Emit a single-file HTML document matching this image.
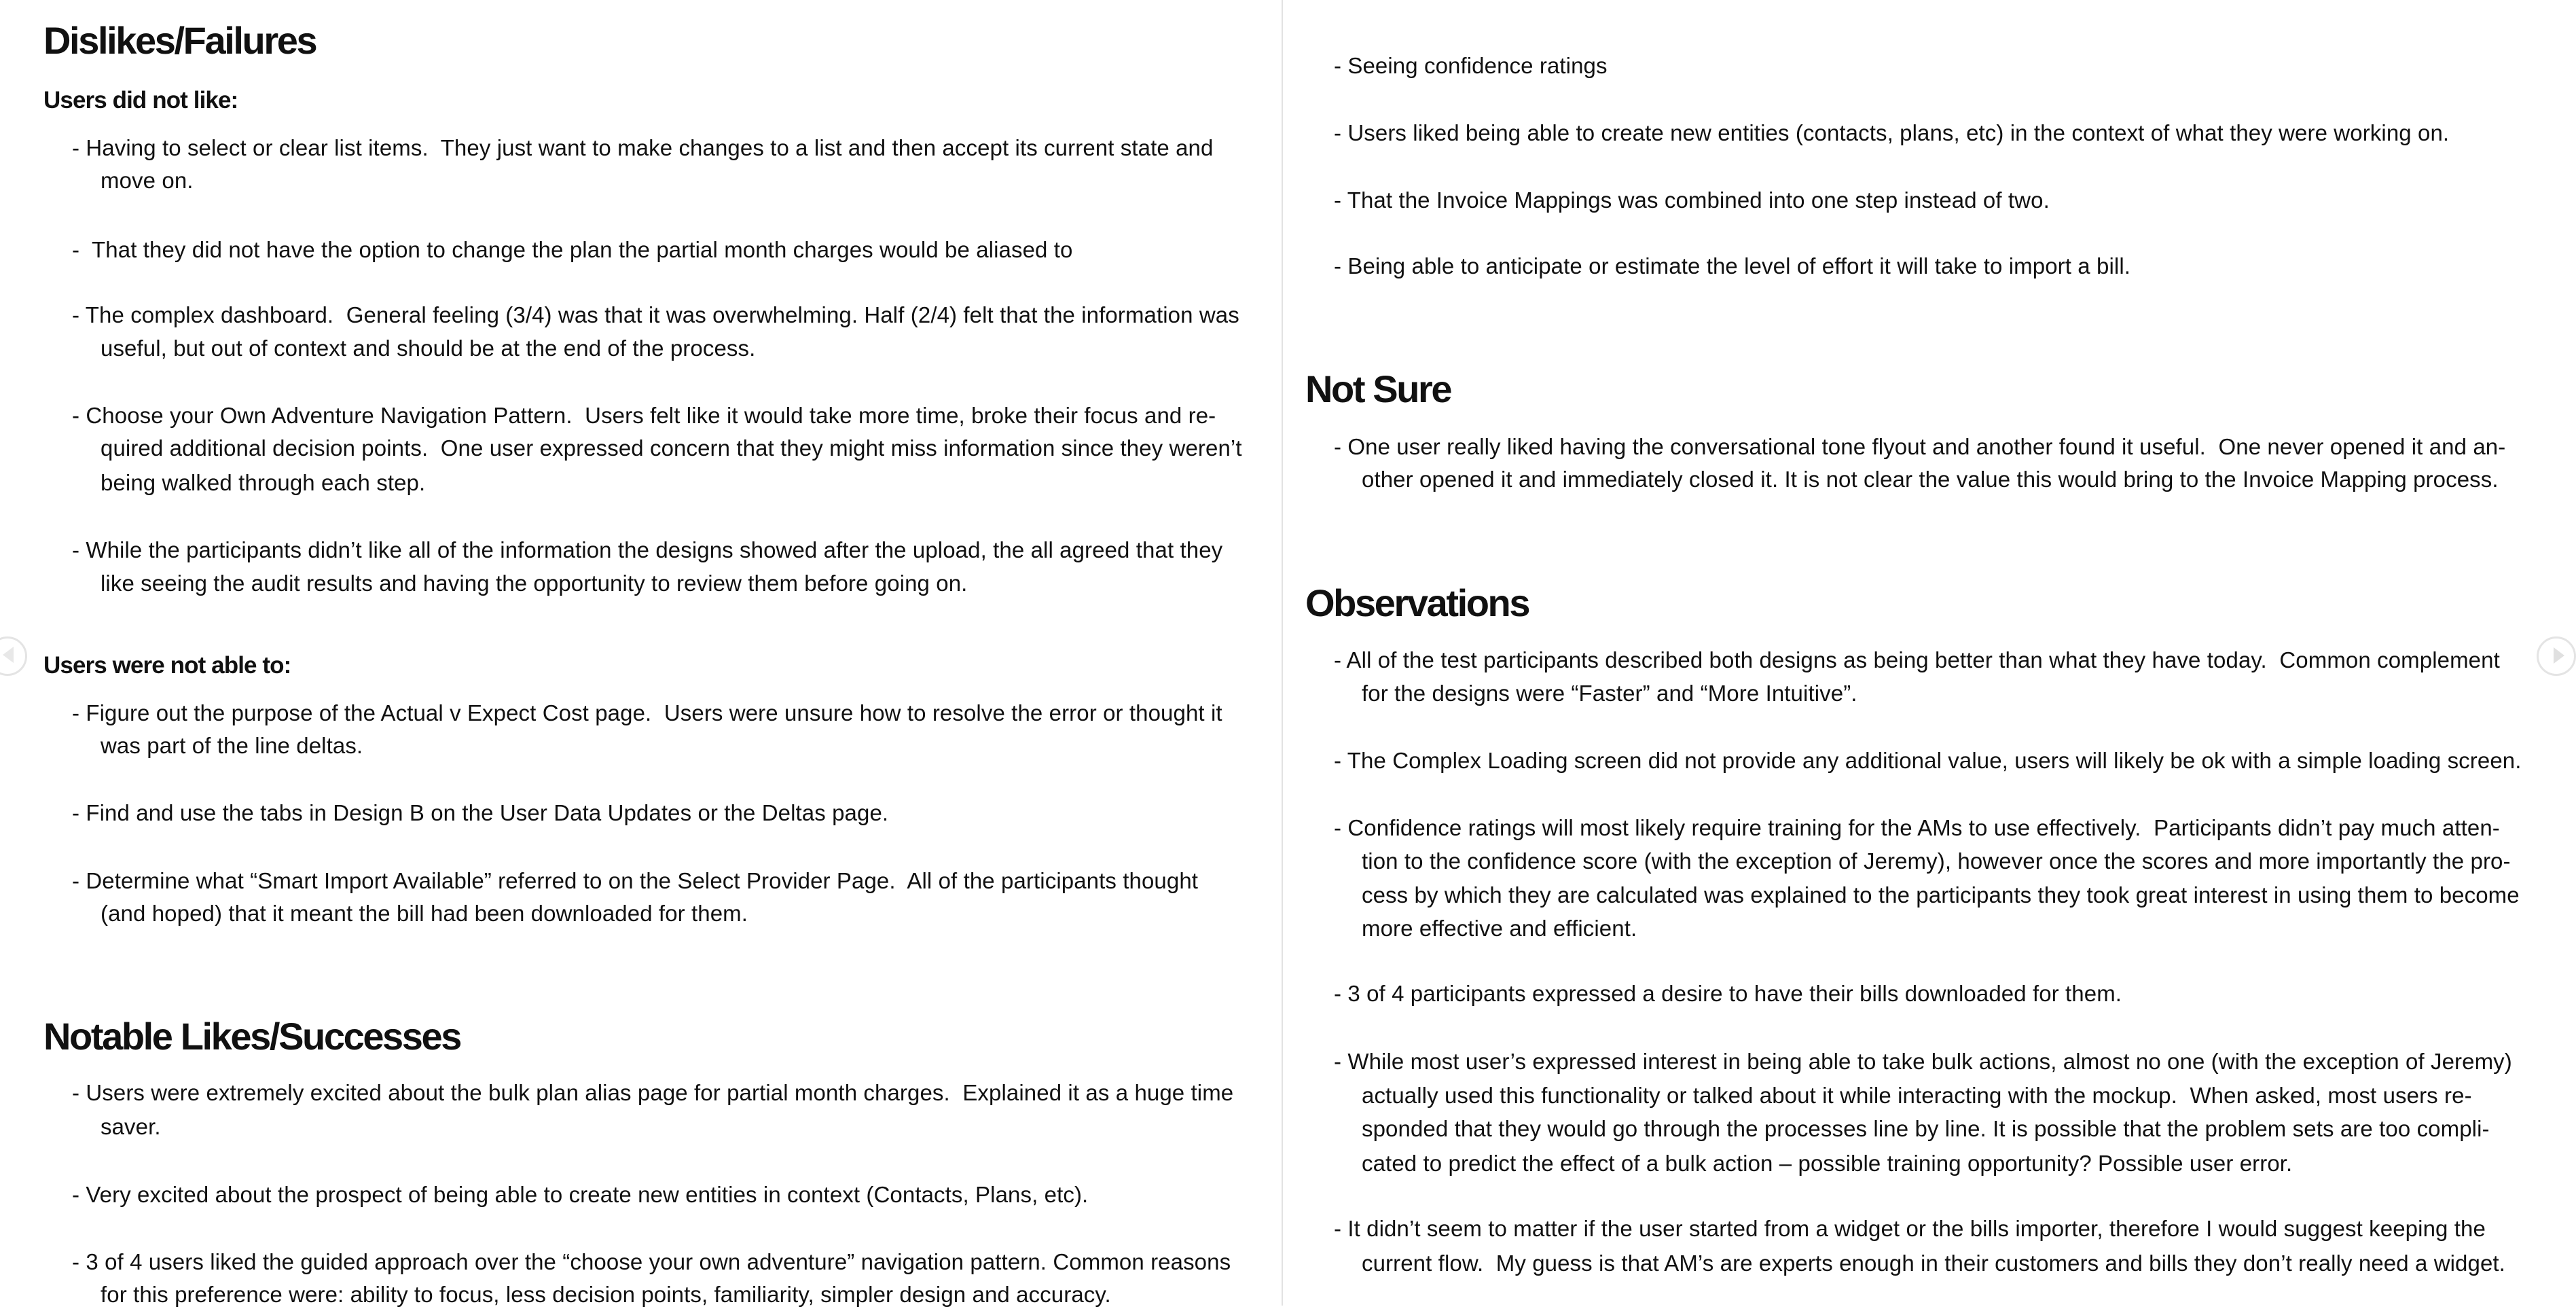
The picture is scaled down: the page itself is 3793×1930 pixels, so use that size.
<!DOCTYPE html>
<html><head><meta charset="utf-8"><style>
html,body{margin:0;padding:0;background:#fff;}
body{width:3793px;height:1922px;position:relative;overflow:hidden;font-family:"Liberation Sans",sans-serif;color:#111;}
.l{position:absolute;white-space:nowrap;font-size:33px;line-height:48px;letter-spacing:0.1px;}
.h{position:absolute;white-space:nowrap;font-size:56px;line-height:70px;font-weight:bold;letter-spacing:-2.4px;}
.s{position:absolute;white-space:nowrap;font-size:35px;line-height:48px;font-weight:bold;letter-spacing:-0.9px;}
.a{left:106px}.ai{left:148px}.b{left:1964px}.bi{left:2005px}
.hl{left:64px}.hr{left:1922px}
.div{position:absolute;left:1887px;top:0;width:2px;height:1922px;background:#e2e2e2;}
.circ{position:absolute;width:52px;height:52px;border:3px solid #e4e4e4;border-radius:50%;}
</style></head><body>
<div class="div"></div>
<div class="circ" style="left:-18px;top:937px"></div>
<div style="position:absolute;left:4px;top:952px;width:0;height:0;border-top:12px solid transparent;border-bottom:12px solid transparent;border-right:16px solid #e8e8e8"></div>
<div class="circ" style="left:3735px;top:937px"></div>
<div style="position:absolute;left:3760px;top:953px;width:0;height:0;border-top:12px solid transparent;border-bottom:12px solid transparent;border-left:16px solid #e0e0e0"></div>

<div class="h hl" style="top:25px">Dislikes/Failures</div>
<div class="s hl" style="top:124px">Users did not like:</div>
<div class="l a" style="top:194px">- Having to select or clear list items.&nbsp; They just want to make changes to a list and then accept its current state and</div>
<div class="l ai" style="top:242px">move on.</div>
<div class="l a" style="top:344px">-&nbsp; That they did not have the option to change the plan the partial month charges would be aliased to</div>
<div class="l a" style="top:440px">- The complex dashboard.&nbsp; General feeling (3/4) was that it was overwhelming. Half (2/4) felt that the information was</div>
<div class="l ai" style="top:489px">useful, but out of context and should be at the end of the process.</div>
<div class="l a" style="top:588px">- Choose your Own Adventure Navigation Pattern.&nbsp; Users felt like it would take more time, broke their focus and re-</div>
<div class="l ai" style="top:636px">quired additional decision points.&nbsp; One user expressed concern that they might miss information since they weren’t</div>
<div class="l ai" style="top:687px">being walked through each step.</div>
<div class="l a" style="top:786px">- While the participants didn’t like all of the information the designs showed after the upload, the all agreed that they</div>
<div class="l ai" style="top:835px">like seeing the audit results and having the opportunity to review them before going on.</div>
<div class="s hl" style="top:956px">Users were not able to:</div>
<div class="l a" style="top:1026px">- Figure out the purpose of the Actual v Expect Cost page.&nbsp; Users were unsure how to resolve the error or thought it</div>
<div class="l ai" style="top:1074px">was part of the line deltas.</div>
<div class="l a" style="top:1173px">- Find and use the tabs in Design B on the User Data Updates or the Deltas page.</div>
<div class="l a" style="top:1273px">- Determine what “Smart Import Available” referred to on the Select Provider Page.&nbsp; All of the participants thought</div>
<div class="l ai" style="top:1321px">(and hoped) that it meant the bill had been downloaded for them.</div>
<div class="h hl" style="top:1491px">Notable Likes/Successes</div>
<div class="l a" style="top:1585px">- Users were extremely excited about the bulk plan alias page for partial month charges.&nbsp; Explained it as a huge time</div>
<div class="l ai" style="top:1635px">saver.</div>
<div class="l a" style="top:1735px">- Very excited about the prospect of being able to create new entities in context (Contacts, Plans, etc).</div>
<div class="l a" style="top:1834px">- 3 of 4 users liked the guided approach over the “choose your own adventure” navigation pattern. Common reasons</div>
<div class="l ai" style="top:1882px">for this preference were: ability to focus, less decision points, familiarity, simpler design and accuracy.</div>

<div class="l b" style="top:73px">- Seeing confidence ratings</div>
<div class="l b" style="top:172px">- Users liked being able to create new entities (contacts, plans, etc) in the context of what they were working on.</div>
<div class="l b" style="top:271px">- That the Invoice Mappings was combined into one step instead of two.</div>
<div class="l b" style="top:368px">- Being able to anticipate or estimate the level of effort it will take to import a bill.</div>
<div class="h hr" style="top:538px">Not Sure</div>
<div class="l b" style="top:634px">- One user really liked having the conversational tone flyout and another found it useful.&nbsp; One never opened it and an-</div>
<div class="l bi" style="top:682px">other opened it and immediately closed it. It is not clear the value this would bring to the Invoice Mapping process.</div>
<div class="h hr" style="top:853px">Observations</div>
<div class="l b" style="top:948px">- All of the test participants described both designs as being better than what they have today.&nbsp; Common complement</div>
<div class="l bi" style="top:997px">for the designs were “Faster” and “More Intuitive”.</div>
<div class="l b" style="top:1096px">- The Complex Loading screen did not provide any additional value, users will likely be ok with a simple loading screen.</div>
<div class="l b" style="top:1195px">- Confidence ratings will most likely require training for the AMs to use effectively.&nbsp; Participants didn’t pay much atten-</div>
<div class="l bi" style="top:1244px">tion to the confidence score (with the exception of Jeremy), however once the scores and more importantly the pro-</div>
<div class="l bi" style="top:1294px">cess by which they are calculated was explained to the participants they took great interest in using them to become</div>
<div class="l bi" style="top:1343px">more effective and efficient.</div>
<div class="l b" style="top:1439px">- 3 of 4 participants expressed a desire to have their bills downloaded for them.</div>
<div class="l b" style="top:1539px">- While most user’s expressed interest in being able to take bulk actions, almost no one (with the exception of Jeremy)</div>
<div class="l bi" style="top:1589px">actually used this functionality or talked about it while interacting with the mockup.&nbsp; When asked, most users re-</div>
<div class="l bi" style="top:1638px">sponded that they would go through the processes line by line. It is possible that the problem sets are too compli-</div>
<div class="l bi" style="top:1689px">cated to predict the effect of a bulk action – possible training opportunity? Possible user error.</div>
<div class="l b" style="top:1785px">- It didn’t seem to matter if the user started from a widget or the bills importer, therefore I would suggest keeping the</div>
<div class="l bi" style="top:1836px">current flow.&nbsp; My guess is that AM’s are experts enough in their customers and bills they don’t really need a widget.</div>
</body></html>
